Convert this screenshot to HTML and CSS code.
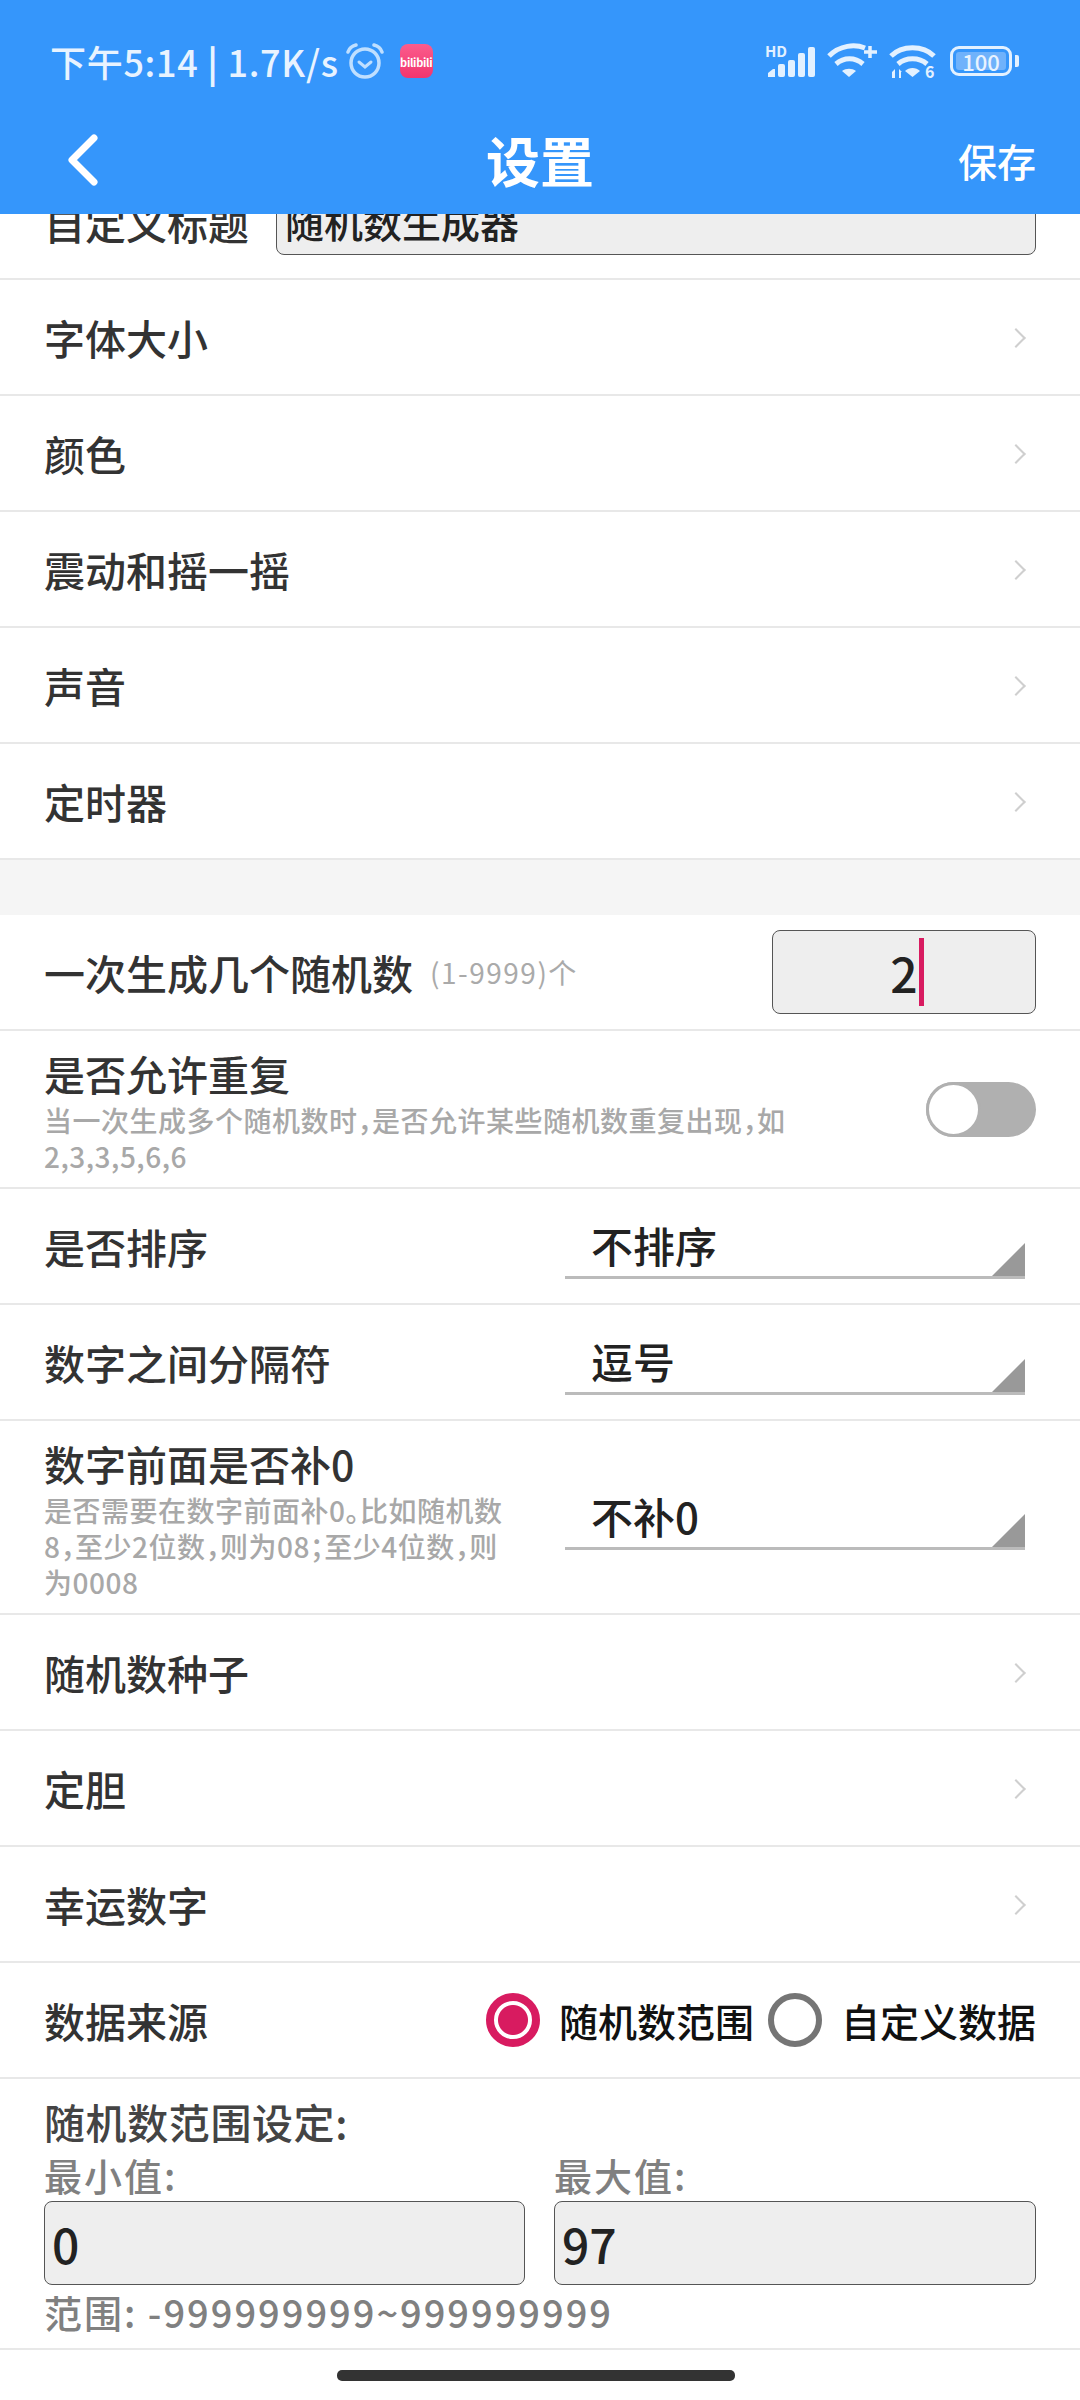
FILE: index.html
```html
<!DOCTYPE html>
<html lang="zh-CN">
<head>
  <meta charset="UTF-8">
  <meta name="viewport" content="width=device-width, initial-scale=1.0">
  <title>设置</title>
  <link rel="stylesheet" href="styles.css">
</head>
<body>
  <div id="screen">
    <header id="header">
      <div class="status-bar">
        <div class="status-left">
          <span class="status-text">下午5:14 <b class="status-sep">|</b> 1.7K/s</span>
          <svg class="alarm" width="38" height="36" viewBox="0 0 38 36" fill="none" stroke="#bfdfff" stroke-linecap="round">
            <circle cx="19" cy="20" r="14" stroke-width="3.5"/>
            <path d="M13 19l6 5 6-5" stroke-width="3"/>
            <path d="M2 9c1-3 4-6 8-7M36 9c-1-3-4-6-8-7" stroke-width="3.5"/>
          </svg>
          <span class="app-badge">bilibili</span>
        </div>
        <div class="status-right">
          <svg class="status-icon" width="50" height="34" viewBox="0 0 50 34" fill="#e3f1ff">
            <text x="0" y="13" class="hd">HD</text>
            <path d="M3 29l5-4h2v8H3z"/>
            <rect x="13" y="20" width="7" height="13" rx="2"/>
            <rect x="23" y="16" width="7" height="17" rx="2"/>
            <rect x="33" y="9" width="7" height="24" rx="2"/>
            <rect x="43" y="3" width="7" height="30" rx="2"/>
          </svg>
          <svg class="status-icon" width="50" height="36" viewBox="0 0 50 36" fill="none" stroke="#e3f1ff" stroke-width="5">
            <path d="M2 13C13 2 28 1 38 5M9 21c8-7 19-7 27 0"/>
            <path d="M15 28c4-3 10-3 14 0l-7 6z" fill="#e3f1ff" stroke="none"/>
            <path d="M43 3v12M37 9h13" stroke-width="3.5"/>
          </svg>
          <svg class="status-icon" width="47" height="36" viewBox="0 0 47 36" fill="none" stroke="#e3f1ff" stroke-width="5">
            <path d="M2 13C13 2 34 2 45 13M9 21c8-7 21-7 29 0"/>
            <path d="M16 28c4-4 11-4 15 0l-7.500 6z" fill="#e3f1ff" stroke="none"/>
            <path d="M3 29l3-3v9H3zM10 26l3 3h-1v6h-2z" fill="#e3f1ff" stroke="none"/>
            <text x="36" y="35" class="wifi-six">6</text>
          </svg>
          <div class="battery">
            <div class="battery-body"><span class="battery-fill">100</span></div>
            <div class="battery-tip"></div>
          </div>
        </div>
      </div>
      <div class="toolbar">
        <svg class="back" width="30" height="52" viewBox="0 0 30 52" fill="none" stroke="#fff" stroke-width="7" stroke-linecap="round" stroke-linejoin="round">
          <path d="M26 4L4 26l22 22"/>
        </svg>
        <div class="toolbar-title">设置</div>
        <div class="toolbar-save">保存</div>
      </div>
    </header>

    <main id="list">
      <div class="row row-clipped">
        <span class="label">自定义标题</span>
        <div class="field field-title">随机数生成器</div>
      </div>
      <div class="row"><span class="label">字体大小</span><i class="arrow"></i></div>
      <div class="row"><span class="label">颜色</span><i class="arrow"></i></div>
      <div class="row"><span class="label">震动和摇一摇</span><i class="arrow"></i></div>
      <div class="row"><span class="label">声音</span><i class="arrow"></i></div>
      <div class="row"><span class="label">定时器</span><i class="arrow"></i></div>

      <div class="gap"></div>

      <div class="row">
        <span class="label">一次生成几个随机数</span>
        <span class="hint">(1-9999)个</span>
        <div class="field field-count"><span>2</span><i class="cursor"></i></div>
      </div>
      <div class="row row-repeat">
        <div class="col">
          <div class="label">是否允许重复</div>
          <div class="sub">当一次生成多个随机数时，是否允许某些随机数重复出现，如<br>2,3,3,5,6,6</div>
        </div>
        <div class="toggle"><i class="knob"></i></div>
      </div>
      <div class="row">
        <span class="label">是否排序</span>
        <div class="select"><span>不排序</span><i class="corner"></i></div>
      </div>
      <div class="row">
        <span class="label">数字之间分隔符</span>
        <div class="select"><span>逗号</span><i class="corner"></i></div>
      </div>
      <div class="row row-zero">
        <div class="col col-narrow">
          <div class="label">数字前面是否补0</div>
          <div class="sub">是否需要在数字前面补0。比如随机数<br>8，至少2位数，则为08；至少4位数，则<br>为0008</div>
        </div>
        <div class="select"><span>不补0</span><i class="corner"></i></div>
      </div>
      <div class="row"><span class="label">随机数种子</span><i class="arrow"></i></div>
      <div class="row"><span class="label">定胆</span><i class="arrow"></i></div>
      <div class="row"><span class="label">幸运数字</span><i class="arrow"></i></div>
      <div class="row">
        <span class="label">数据来源</span>
        <div class="radios">
          <i class="radio radio-on"></i><span class="radio-label">随机数范围</span>
          <i class="radio"></i><span class="radio-label">自定义数据</span>
        </div>
      </div>
      <div class="range">
        <div class="range-title">随机数范围设定:</div>
        <div class="range-grid">
          <div class="range-cell">
            <div class="range-label">最小值:</div>
            <div class="field field-range">0</div>
          </div>
          <div class="range-cell">
            <div class="range-label">最大值:</div>
            <div class="field field-range">97</div>
          </div>
        </div>
        <div class="range-label range-note">范围: -999999999~999999999</div>
      </div>
    </main>

    <div class="home-area"><div class="home-bar"></div></div>
  </div>
</body>
</html>
```

FILE: styles.css
```css
*, *::before, *::after { box-sizing: border-box; }
html, body {
  margin: 0;
  padding: 0;
  background: white;
  font-family: "Noto Sans CJK SC", sans-serif;
}
#screen {
  width: 1080px;
  height: 2400px;
  display: flex;
  flex-direction: column;
  overflow: hidden;
}

/* header */
#header {
  height: 214px;
  background: #3596fb;
  color: white;
  flex: none;
}
.status-bar {
  height: 122px;
  display: flex;
  justify-content: space-between;
  align-items: center;
  padding: 0 61px 0 50px;
}
.status-left, .status-right {
  display: flex;
  align-items: center;
}
.status-text {
  font-size: 36px;
  font-weight: 500;
  letter-spacing: 0.7px;
  color: #e8f3ff;
  white-space: nowrap;
}
.status-sep { font-weight: 700; }
.alarm { margin-left: 7px; }
.app-badge {
  width: 33px;
  height: 34px;
  margin-left: 16px;
  border-radius: 8px;
  background: linear-gradient(#fb5c8c, #f2356e);
  color: white;
  font-size: 11px;
  font-weight: 700;
  line-height: 36px;
  letter-spacing: -0.3px;
  text-align: center;
  white-space: nowrap;
}
.status-right { gap: 12px; }
.status-icon { overflow: visible; }
.hd { font-size: 15px; font-weight: 700; }
.wifi-six { font-size: 16px; font-weight: 700; fill: #e3f1ff; stroke: none; }
.battery { display: flex; align-items: center; gap: 3px; margin-left: 2px; }
.battery-body {
  width: 62px;
  height: 30px;
  padding: 3px;
  border: 3px solid #e3f1ff;
  border-radius: 9px;
  display: flex;
}
.battery-fill {
  flex: 1;
  background: #6fb2fb;
  border-radius: 3px;
  color: #e8f3ff;
  font-size: 22px;
  font-weight: 500;
  line-height: 18px;
  text-align: center;
}
.battery-tip {
  width: 4px;
  height: 12px;
  background: #e3f1ff;
  border-radius: 0 2px 2px 0;
}
.toolbar {
  height: 92px;
  display: grid;
  grid-template-columns: 1fr auto 1fr;
  align-items: center;
  padding: 0 44px 16px;
}
.back { margin-left: 24px; }
.toolbar-title {
  font-size: 54px;
  font-weight: 700;
  line-height: 1;
}
.toolbar-save {
  justify-self: end;
  font-size: 39px;
  font-weight: 500;
  line-height: 1;
}

/* list */
#list { flex: 1; }
.row {
  height: 116px;
  padding: 0 44px;
  display: flex;
  align-items: center;
  border-bottom: 2px solid #e8e8e8;
  overflow: hidden;
}
.label {
  font-size: 41px;
  font-weight: 500;
  color: #333;
  line-height: 56px;
  white-space: nowrap;
}
.arrow {
  width: 14px;
  height: 14px;
  margin: 2px 13px 0 auto;
  border-top: 2px solid #cfcfcf;
  border-right: 2px solid #cfcfcf;
  transform: rotate(45deg);
}
.gap { height: 55px; background: #f5f5f5; }
.hint {
  margin-left: 17px;
  font-size: 28px;
  letter-spacing: 1.5px;
  color: #aaa;
  white-space: nowrap;
}
.field {
  background: #eee;
  border: 1px solid #555;
  border-radius: 8px;
  color: #222;
  display: flex;
  align-items: center;
}
.row-clipped {
  height: 66px;
  align-items: flex-end;
}
.row-clipped .label { margin-bottom: 28px; }
.field-title {
  width: 760px;
  height: 68px;
  margin-left: auto;
  margin-bottom: 23px;
  padding-left: 8px;
  flex: none;
  font-size: 39px;
  font-weight: 500;
}
.field-count {
  width: 264px;
  height: 84px;
  margin-left: auto;
  padding-left: 6px;
  justify-content: center;
  font-size: 48px;
  font-weight: 500;
}
.cursor {
  width: 5px;
  height: 68px;
  margin-left: 1px;
  background: #d81b60;
}
.col { flex: 1; min-width: 0; }
.sub {
  margin-top: 1px;
  font-size: 28px;
  font-weight: 500;
  line-height: 36px;
  letter-spacing: 0.5px;
  color: #a8a8a8;
  font-feature-settings: "halt";
  white-space: nowrap;
}
.row-repeat { height: 158px; }
.toggle {
  width: 110px;
  height: 55px;
  margin-left: auto;
  border-radius: 28px;
  background: #b0b0b0;
  flex: none;
}
.knob {
  display: block;
  width: 55px;
  height: 55px;
  border-radius: 50%;
  background: white;
  border: 3px solid #b0b0b0;
}
.select {
  width: 460px;
  height: 66px;
  margin-left: auto;
  margin-right: 11px;
  padding-left: 26px;
  flex: none;
  display: flex;
  align-items: center;
  justify-content: space-between;
  border-bottom: 3px solid #bbb;
  font-size: 42px;
  font-weight: 500;
  color: #222;
}
.corner {
  width: 33px;
  height: 33px;
  align-self: flex-end;
  background: #999;
  clip-path: polygon(100% 0, 100% 100%, 0 100%);
}
.row-zero { height: 194px; }
.col-narrow { flex: none; width: 490px; }
.radios {
  margin-left: auto;
  display: flex;
  align-items: center;
}
.radio {
  width: 54px;
  height: 54px;
  border-radius: 50%;
  border: 6px solid #757575;
  background: white;
  margin-right: 19px;
  flex: none;
}
.radio-on {
  border: 8px solid #d81b60;
  background: radial-gradient(circle, #d81b60 0 14.5px, white 15.5px);
}
.radio-label {
  font-size: 39px;
  font-weight: 500;
  color: #111;
  white-space: nowrap;
}
.radio-label + .radio { margin-left: 14px; }

/* range block */
.range {
  height: 271px;
  padding: 14px 44px 0;
  border-bottom: 2px solid #e8e8e8;
}
.range-title {
  font-size: 41px;
  font-weight: 500;
  line-height: 56px;
  letter-spacing: 0.6px;
  color: #444;
}
.range-grid {
  display: grid;
  grid-template-columns: 481px 482px;
  gap: 29px;
}
.range-label {
  font-size: 38px;
  font-weight: 500;
  line-height: 52px;
  letter-spacing: 2px;
  color: #808080;
}
.field-range {
  height: 84px;
  padding-left: 7px;
  font-size: 48px;
  font-weight: 500;
}
.range-note { margin-top: 1px; }

.home-area {
  height: 49px;
  flex: none;
  display: flex;
  justify-content: center;
  padding: 19px 8px 0 0;
}
.home-bar {
  width: 398px;
  height: 11px;
  border-radius: 5px;
  background: #333;
}
```
